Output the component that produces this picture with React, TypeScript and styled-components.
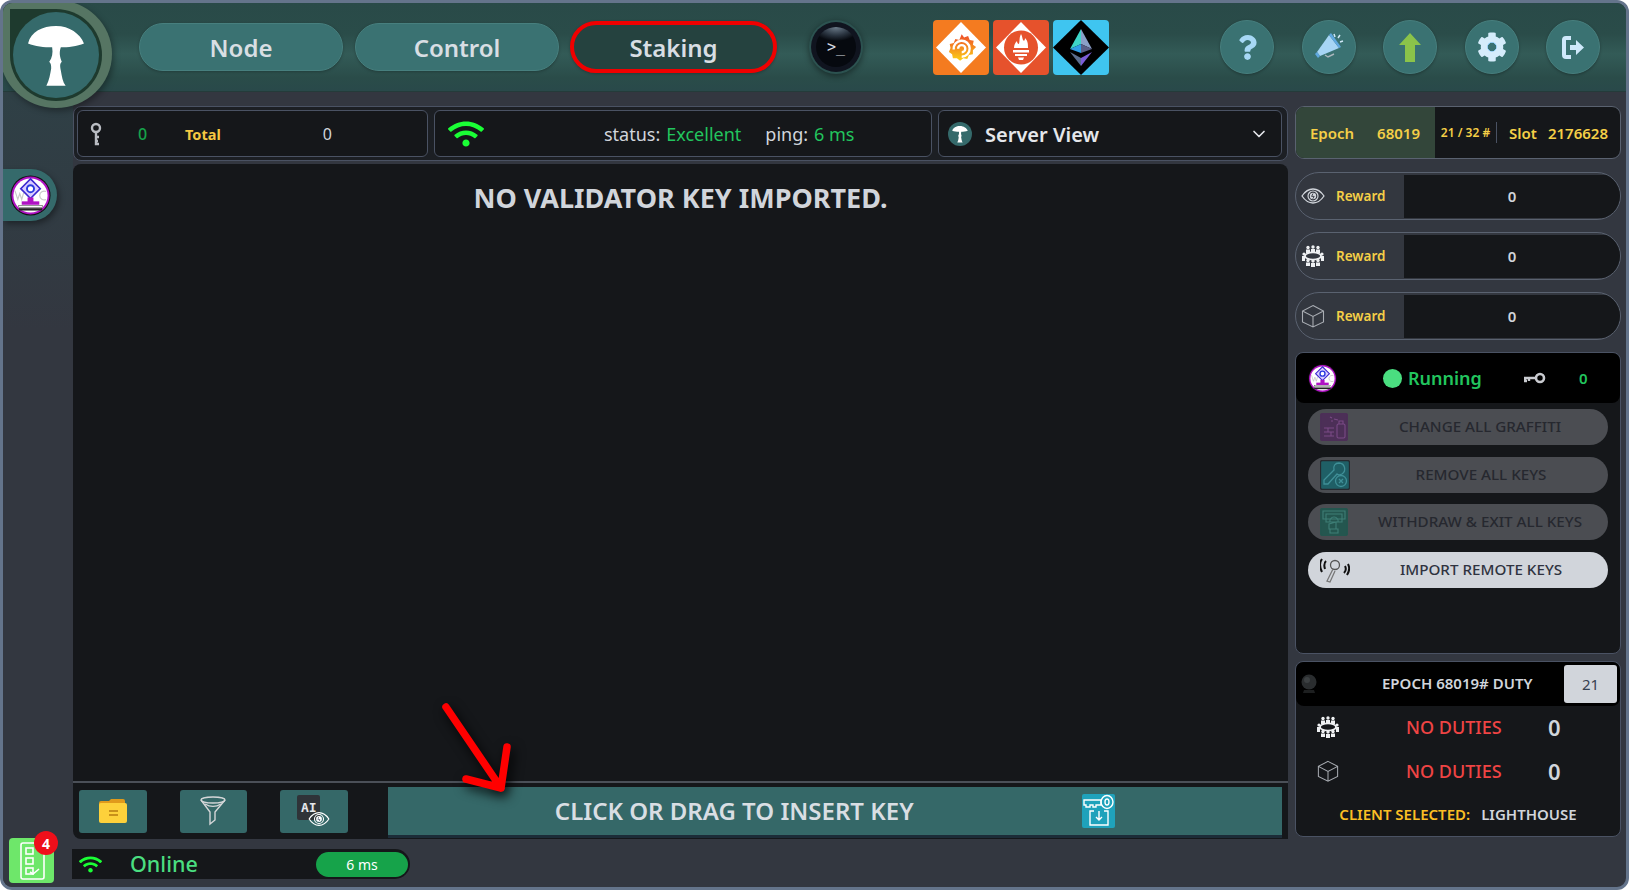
import React from 'react';
import styled, { createGlobalStyle } from 'styled-components';
import { FaWifi, FaCog, FaQuestion } from 'react-icons/fa';
import { ChevronDown } from 'lucide-react';

const Global = createGlobalStyle`
  html, body { margin: 0; padding: 0; background: #ffffff; }
  * { box-sizing: border-box; }
  svg { flex: none; }
  body { font-family: "Noto Sans", "Liberation Sans", sans-serif; }
`;

// icons
const Mushroom = (props: { size: number }) => (
  <svg width={props.size} height={props.size} viewBox="0 0 112 108">
    <path fill="#fff" d="M27 42C30 30 42 24 56 24C70 24 81 32 85 42C78 45 68 46 61 46C59 52 60 56 62 61C60 63 60 65 61 70C62 76 63 82 66 86L46 86C49 80 50 74 51 68C51 65 51 63 49 61C52 57 53 52 52 46C44 46 34 45 27 42Z" />
  </svg>
);

const VcLogo = (props: { size: number }) => (
  <svg width={props.size} height={props.size} viewBox="0 0 42 42">
    <circle cx="21" cy="21" r="20.500" fill="#111" />
    <circle cx="21" cy="21" r="19.500" fill="#b012c4" />
    <circle cx="21" cy="21" r="17.500" fill="#fff" />
    <path d="M5 16l3 9 2-6 2 6 2-7M37 17a4.500 4.500 0 1 0 0 8" fill="none" stroke="#c9c9c9" strokeWidth="1.200" />
    <path d="M21 4L31 14 21 24 11 14Z" fill="#d9ccff" stroke="#3b28d0" strokeWidth="1.600" />
    <circle cx="21" cy="14" r="3.600" fill="#fff" stroke="#2a3ae0" strokeWidth="2" />
    <rect x="18" y="23" width="6" height="5" fill="#b012c4" />
    <rect x="12" y="27" width="18" height="3.500" fill="#b012c4" />
    <rect x="9" y="31" width="24" height="2" fill="#fff" stroke="#222" strokeWidth=".5" />
    <rect x="9" y="34" width="24" height="2.400" fill="#222" />
  </svg>
);

const KeyUp = () => (
  <svg width="14" height="24" viewBox="0 0 14 24" fill="none">
    <circle cx="7" cy="6" r="4" stroke="#b9bcc2" strokeWidth="2.400" />
    <path d="M7 10V22H10M7 15H10M7 19H9" stroke="#b9bcc2" strokeWidth="2.400" />
  </svg>
);

const KeySide = () => (
  <svg width="22" height="12" viewBox="0 0 22 12" fill="none">
    <circle cx="16" cy="6" r="4" stroke="#c9cbd0" strokeWidth="2.600" />
    <path d="M12 6H1V9H3M5 6V9" stroke="#c9cbd0" strokeWidth="2.400" />
  </svg>
);

const Eye = () => (
  <svg width="24" height="16" viewBox="0 0 24 16" fill="none">
    <path d="M1 8C5 2 9 1 12 1s7 1 11 7c-4 6-8 7-11 7S5 14 1 8Z" stroke="#d1d5db" strokeWidth="1.300" />
    <circle cx="12" cy="8" r="5" stroke="#d1d5db" strokeWidth="1.200" />
    <circle cx="12" cy="8" r="3.200" fill="#d1d5db" />
    <path d="M12 5.500L10.600 8.400H13.200L11.800 10.800" stroke="#33373f" strokeWidth=".9" />
  </svg>
);

const Committee = (props: { size?: number }) => (
  <svg width={props.size || 22} height={props.size || 22} viewBox="0 0 22 22" fill="#eef0f2">
    <circle cx="6" cy="2.500" r="1.700" /><circle cx="11" cy="2" r="1.700" /><circle cx="16" cy="2.500" r="1.700" />
    <path d="M4 4.500h4V8H4zM9 4h4v4H9zM14 4.500h4V8h-4z" />
    <circle cx="2" cy="9" r="1.600" /><circle cx="20" cy="9" r="1.600" />
    <path d="M0 11h3v5H0zM19 11h3v5h-3z" />
    <ellipse cx="11" cy="11" rx="8" ry="3.600" fill="none" stroke="#eef0f2" strokeWidth="1.800" />
    <circle cx="6" cy="15.500" r="1.700" /><circle cx="11" cy="16" r="1.700" /><circle cx="16" cy="15.500" r="1.700" />
    <path d="M4 17.500h4V21H4zM9 18h4v4H9zM14 17.500h4V21h-4z" />
  </svg>
);

const Cube = (props: { size?: number }) => (
  <svg width={props.size || 24} height={props.size || 24} viewBox="0 0 24 24" fill="none" stroke="#a9adb3" strokeWidth="1.100">
    <path d="M12 1.500L22.500 7V18L12 23 1.500 18V7ZM1.500 7L12 12.500 22.500 7M12 12.500V23" />
  </svg>
);

const Funnel = () => (
  <svg width="26" height="30" viewBox="0 0 26 30" fill="none" stroke="#d4d6d8" strokeWidth="1.400">
    <ellipse cx="13" cy="4" rx="12" ry="3" />
    <path d="M1 4L10 16V28L15 24V16L25 4" />
    <path d="M5 8C10 11 16 11 21 8" />
  </svg>
);

const Folder = () => (
  <svg width="28" height="24" viewBox="0 0 28 24">
    <path fill="#e09a1c" d="M0 4a2 2 0 0 1 2-2h8l2 -2h12a2 2 0 0 1 2 2v4H0Z" />
    <rect y="4" width="28" height="20" rx="2" fill="#fdd13b" />
    <rect x="10" y="11" width="9" height="2" fill="#c8901a" />
    <rect x="10" y="15" width="9" height="2" fill="#c8901a" />
  </svg>
);

const Megaphone = () => (
  <svg width="30" height="28" viewBox="0 0 30 28">
    <path fill="#a7d5f5" d="M15 2L25 15 6 23 3 19Z" />
    <path fill="#5fa8e0" d="M15 2l2-2 10 14-2 1ZM3 19l3 4-2 2-3-4Z" />
    <path fill="none" stroke="#a9b5bc" strokeWidth="1.500" d="M11 22l3 2 6-3" />
    <path stroke="#cfe8f7" strokeWidth="1.500" d="M20 1l1 3M26 2l-2 3M29 8l-3 1" />
  </svg>
);

const ArrowUp = () => (
  <svg width="22" height="29" viewBox="0 0 22 29">
    <path fill="#8bc34a" d="M11 0L22 12H16V29H6V12H0Z" />
  </svg>
);

const ExitIcon = () => (
  <svg width="24" height="23" viewBox="0 0 24 23" fill="none">
    <path d="M10 2H5a2 2 0 0 0-2 2V19a2 2 0 0 0 2 2H10" stroke="#cfe9fb" strokeWidth="4" />
    <path fill="#cfe9fb" d="M9 9h6V4l8 7.500L15 19v-5H9Z" />
  </svg>
);

const GrafanaMark = () => (
  <svg width="56" height="55" viewBox="0 0 56 55">
    <defs>
      <linearGradient id="gf" x1="0" y1="1" x2="0" y2="0">
        <stop offset="0" stopColor="#fcd116" />
        <stop offset="1" stopColor="#ee4a2a" />
      </linearGradient>
    </defs>
    <path fill="#fff" d="M28 2L53 27.500 28 53 3 27.500Z" />
    <g transform="translate(5.500 5.500) scale(0.8)">
      <path fill="url(#gf)" d="M29 11l3 4 5-2 2 5 5 1-1 5 4 3-4 4 0 5-5 1-2 5-5-1-4 3-4-3-5 0-1-5-4-3 2-5-1-5 5-1 2-5 5 1Z" />
      <path d="M19 30a10 10 0 1 1 10 9M24.500 29a4.500 4.500 0 1 1 4.500 4.500" fill="none" stroke="#fff" strokeWidth="3" />
    </g>
  </svg>
);

const PrometheusMark = () => (
  <svg width="56" height="55" viewBox="0 0 56 55">
    <path fill="#fff" d="M28 2L53 27.500 28 53 3 27.500Z" />
    <circle cx="28" cy="27.500" r="17" fill="#e6522c" />
    <path fill="#fff" d="M28 14c2 4 1 5 3 7 1-1 1-3 1-3 3 3 3 6 3 10H21c0-3 1-5 3-7 0 2 1 3 2 3 1-4 0-6 2-10ZM20 30h16v2.500H20ZM22 34h12v2H22ZM25 37.500h6l-1 2.500h-4Z" />
  </svg>
);

const EthereumMark = () => (
  <svg width="56" height="55" viewBox="0 0 56 55">
    <path fill="#000" d="M28 0L56 27.500 28 55 0 27.500Z" />
    <path fill="#3dd6c8" d="M28 9L17 29l11-5Z" />
    <path fill="#8aa0c8" d="M28 9L39 29l-11-5Z" />
    <path fill="#2f9fe6" d="M17 29l11-5v9Z" />
    <path fill="#5a5f88" d="M39 29l-11-5v9Z" />
    <path fill="#5c6e8e" d="M17 32l11 6v8Z" />
    <path fill="#7b5cd6" d="M39 32l-11 6v8Z" />
  </svg>
);

const GraffitiIcon = () => (
  <svg width="28" height="28" viewBox="0 0 28 28" fill="none" stroke="#7a4a86" strokeWidth="1.100">
    <rect x="0.500" y="0.500" width="27" height="27" rx="2" fill="#4c2f57" stroke="#4c2f57" />
    <rect x="17" y="11" width="8" height="14" rx="1.500" />
    <path d="M19 11V8h4v3M4 15h10M4 19h10M4 23h10M8 15v4M11 19v4M14 6l4 1M10 4l2 1M11 8l2 0" />
  </svg>
);

const RemoveKeyIcon = () => (
  <svg width="30" height="30" viewBox="0 0 30 30" fill="none" stroke="#3f8f97" strokeWidth="1.300">
    <rect x="0.500" y="0.500" width="29" height="29" rx="2" fill="#1f5f66" stroke="#262a30" />
    <path d="M19 3a6 6 0 0 1 3 11c-2 1-4 1-5 0L8 24H4v-4L14 10c-1-4 1-7 5-7Z" />
    <circle cx="21" cy="21" r="5.500" />
    <path d="M19 19l4 4M23 19l-4 4" />
  </svg>
);

const WithdrawIcon = () => (
  <svg width="28" height="28" viewBox="0 0 28 28" fill="none" stroke="#3e7f77" strokeWidth="1.100">
    <rect x="0.500" y="0.500" width="27" height="27" rx="2" fill="#24564f" stroke="#24564f" />
    <path d="M3 3h22v8H3ZM6 6h16v8H6ZM10 14a4 4 0 0 1 4-5 4 4 0 0 1 4 5M9 16l7-2v7H9ZM10 21h8v4h-8Z" />
  </svg>
);

const RemoteKeyIcon = () => (
  <svg width="30" height="28" viewBox="0 0 30 28" fill="none">
    <path d="M6 5C4 7 4 10 5 13M2 3C-1 7 0 12 2 16M25 10c1 2 1 5-1 7M28 8c2 4 1 8-1 11" stroke="#111" strokeWidth="2" />
    <circle cx="15" cy="9" r="4.500" stroke="#555" strokeWidth="1.300" />
    <path d="M13 13L7 25l3 1 5-11" stroke="#777" strokeWidth="1.300" />
  </svg>
);

const Sphere = () => (
  <svg width="16" height="20" viewBox="0 0 16 20">
    <circle cx="8" cy="8" r="7.500" fill="#2a2d2f" />
    <circle cx="6" cy="6" r="3" fill="#3c4042" />
    <path d="M3 16h10l1 3H2Z" fill="#1d1f20" />
  </svg>
);

const ChecklistIcon = () => (
  <svg width="30" height="38" viewBox="0 0 30 38" fill="none" stroke="#fff" strokeWidth="1.600">
    <rect x="4" y="1" width="23" height="36" rx="2" />
    <rect x="9" y="6" width="7" height="6" />
    <rect x="9" y="16" width="7" height="6" />
    <rect x="9" y="26" width="7" height="6" />
    <path d="M13 30l3 2 6-5" />
  </svg>
);

const KeyImportIcon = () => (
  <svg width="33" height="34" viewBox="0 0 33 34" fill="none" stroke="#fff" strokeWidth="1.400">
    <rect width="33" height="34" rx="2" fill="#1fa2bb" stroke="none" />
    <path d="M2 6H19v5h-5v2h-3v-2H8v2H4v-2H2Z" />
    <ellipse cx="25" cy="8" rx="6" ry="6.500" />
    <ellipse cx="25" cy="8" rx="2" ry="3" />
    <path d="M12 17H8v14h18V17h-4M17 17v9M14 23l3 3 3-3" />
  </svg>
);

const RedArrow = () => (
  <svg width="80" height="100" viewBox="0 0 80 100" fill="none">
    <path d="M7 7L62 88M68 47L62 88 27 79" stroke="#ff0000" strokeWidth="7.500" strokeLinecap="round" strokeLinejoin="round" />
  </svg>
);

const App = () => {
  return (
    <>
      <Global />
      <Frame>
        <LogoBadge>
          <LogoRing>
            <LogoCore><Mushroom size={108} /></LogoCore>
          </LogoRing>
        </LogoBadge>

        <Header>
          <NavPill>Node</NavPill>
          <NavPill $tight>Control</NavPill>
          <NavPill $active>Staking</NavPill>
          <TerminalBtn><TerminalFace>&gt;_</TerminalFace></TerminalBtn>
          <ServiceTiles>
            <ServiceTile $bg="#f47b20"><GrafanaMark /></ServiceTile>
            <ServiceTile $bg="#e6522c"><PrometheusMark /></ServiceTile>
            <ServiceTile $bg="#3fc5f0"><EthereumMark /></ServiceTile>
          </ServiceTiles>
          <RoundButtons>
            <RoundBtn><FaQuestion size={25} color="#a7d8f5" /></RoundBtn>
            <RoundBtn><Megaphone /></RoundBtn>
            <RoundBtn><ArrowUp /></RoundBtn>
            <RoundBtn><GearWrap><FaCog size={30} color="#d5ecfb" /></GearWrap></RoundBtn>
            <RoundBtn><ExitIcon /></RoundBtn>
          </RoundButtons>
        </Header>

        <Body>
          <Sidebar>
            <SideTab><VcLogo size={41} /></SideTab>
            <TaskButton>
              <ChecklistIcon />
              <TaskBadge>4</TaskBadge>
            </TaskButton>
          </Sidebar>

          <MainColumn>
            <TopRow>
              <KeyBox>
                <KeyUp />
                <GreenCount>0</GreenCount>
                <TotalLabel>Total</TotalLabel>
                <TotalValue>0</TotalValue>
              </KeyBox>
              <NetBox>
                <FaWifi size={36} color="#1aff35" />
                <NetLabel $offset={120}>status:</NetLabel>
                <NetValue>Excellent</NetValue>
                <NetLabel $offset={24}>ping:</NetLabel>
                <NetValue>6 ms</NetValue>
              </NetBox>
              <ViewBox>
                <ViewLogo><Mushroom size={30} /></ViewLogo>
                <ViewTitle>Server View</ViewTitle>
                <ChevronDown size={20} color="#e5e7eb" />
              </ViewBox>
            </TopRow>

            <KeyPanel>
              <EmptyTitle>NO VALIDATOR KEY IMPORTED.</EmptyTitle>
            </KeyPanel>

            <Toolbar>
              <ToolTile><Folder /></ToolTile>
              <ToolTile><Funnel /></ToolTile>
              <ToolTile>
                <AiChip>AI</AiChip>
                <AiEye><Eye /></AiEye>
              </ToolTile>
              <InsertButton>
                <span>CLICK OR DRAG TO INSERT KEY</span>
                <KeyImportIcon />
              </InsertButton>
            </Toolbar>

            <StatusBar>
              <FaWifi size={23} color="#1aff35" />
              <OnlineText>Online</OnlineText>
              <PingPill>6 ms</PingPill>
            </StatusBar>
          </MainColumn>

          <RightColumn>
            <EpochBar>
              <EpochPart>
                <span>Epoch</span>
                <span>68019</span>
              </EpochPart>
              <SlotCount>21 / 32 #</SlotCount>
              <SlotPart>
                <span>Slot</span>
                <span>2176628</span>
              </SlotPart>
            </EpochBar>

            <RewardList>
              <RewardRow>
                <RewardIcon><Eye /></RewardIcon>
                <RewardLabel>Reward</RewardLabel>
                <RewardValue>0</RewardValue>
              </RewardRow>
              <RewardRow>
                <RewardIcon><Committee /></RewardIcon>
                <RewardLabel>Reward</RewardLabel>
                <RewardValue>0</RewardValue>
              </RewardRow>
              <RewardRow>
                <RewardIcon><Cube /></RewardIcon>
                <RewardLabel>Reward</RewardLabel>
                <RewardValue>0</RewardValue>
              </RewardRow>
            </RewardList>

            <ClientPanel>
              <ClientHead>
                <VcLogo size={29} />
                <RunningDot />
                <RunningText>Running</RunningText>
                <KeySide />
                <RunningCount>0</RunningCount>
              </ClientHead>
              <ActionList>
                <ActionBtn><GraffitiIcon /><span>CHANGE ALL GRAFFITI</span></ActionBtn>
                <ActionBtn><RemoveKeyIcon /><span>REMOVE ALL KEYS</span></ActionBtn>
                <ActionBtn><WithdrawIcon /><span>WITHDRAW &amp; EXIT ALL KEYS</span></ActionBtn>
                <ActionBtn $enabled><RemoteKeyIcon /><span>IMPORT REMOTE KEYS</span></ActionBtn>
              </ActionList>
            </ClientPanel>

            <DutyPanel>
              <DutyHead>
                <Sphere />
                <DutyTitle>EPOCH 68019# DUTY</DutyTitle>
                <SlotBox>21</SlotBox>
              </DutyHead>
              <DutyRow>
                <Committee size={22} />
                <NoDuties>NO DUTIES</NoDuties>
                <DutyCount>0</DutyCount>
              </DutyRow>
              <DutyRow>
                <Cube size={22} />
                <NoDuties>NO DUTIES</NoDuties>
                <DutyCount>0</DutyCount>
              </DutyRow>
              <ClientLine>
                <b>CLIENT SELECTED:</b>
                <span>LIGHTHOUSE</span>
              </ClientLine>
            </DutyPanel>
          </RightColumn>
        </Body>

        <ArrowMark><RedArrow /></ArrowMark>
      </Frame>
    </>
  );
};

export default App;

// frame
const Frame = styled.div`
  position: relative;
  width: 1629px;
  height: 890px;
  display: flex;
  flex-direction: column;
  overflow: hidden;
  background: #333740;
  border: 3px solid #64748b;
  border-radius: 12px;
`;

// logo
const LogoBadge = styled.div`
  position: absolute;
  left: -3px;
  top: -3px;
  z-index: 3;
  width: 112px;
  height: 108px;
  padding: 9px 10px 7px 10px;
  background: #567563;
  border-radius: 12px 50% 50% 50%;
  box-shadow: 2px 3px 6px rgba(0, 0, 0, 0.35);
`;

const LogoRing = styled.div`
  width: 92px;
  height: 92px;
  padding: 3px;
  background: #1e3a2e;
  border-radius: 0 50% 50% 50%;
`;

const LogoCore = styled.div`
  width: 86px;
  height: 86px;
  display: flex;
  align-items: center;
  justify-content: center;
  overflow: hidden;
  background: #356a6b;
  border-radius: 50%;
`;

// header
const Header = styled.header`
  flex: none;
  height: 89px;
  display: flex;
  align-items: center;
  padding: 0 0 0 136px;
  background: linear-gradient(180deg, #294a48 0%, #2a4c49 35%, #335b57 58%, #2a4c49 85%, #29494a 100%);
  border-bottom: 1px solid #243b3a;
`;

const NavPill = styled.div<{ $active?: boolean; $tight?: boolean }>`
  width: ${props => props.$active ? '207px' : '204px'};
  height: ${props => props.$active ? '52px' : '48px'};
  margin-right: ${props => props.$active ? '33px' : props.$tight ? '11px' : '12px'};
  display: flex;
  align-items: center;
  justify-content: center;
  font-size: 24px;
  font-weight: 600;
  color: #d8dee3;
  background: ${props => props.$active ? '#25423f' : '#3a7272'};
  border: ${props => props.$active ? '4px solid #f00000' : '1px solid #477f7e'};
  border-radius: 26px;
  box-shadow: 0 1px 3px rgba(0, 0, 0, 0.25);
`;

const TerminalBtn = styled.div`
  width: 50px;
  height: 50px;
  margin: 0 1px;
  display: flex;
  align-items: center;
  justify-content: center;
  background: #10141f;
  border-radius: 50%;
  box-shadow: 0 0 0 2px #2c5250, 0 2px 6px 2px rgba(0, 0, 0, 0.45);
`;

const TerminalFace = styled.div`
  width: 40px;
  height: 40px;
  display: flex;
  align-items: center;
  justify-content: center;
  font-family: "DejaVu Sans Mono", monospace;
  font-size: 15px;
  color: #d5dbe0;
  background: radial-gradient(ellipse 24px 14px at 50% 0%, #6d7d8c 0%, #2a3440 60%, transparent 100%), #06090f;
  border-radius: 50%;
`;

const ServiceTiles = styled.div`
  margin-left: 71px;
  display: flex;
  gap: 4px;
`;

const ServiceTile = styled.div<{ $bg: string }>`
  width: 56px;
  height: 55px;
  background: ${props => props.$bg};
  border-radius: 4px;
`;

const RoundButtons = styled.div`
  margin-left: 111px;
  display: flex;
  gap: 27.500px;
`;

const RoundBtn = styled.div`
  width: 54px;
  height: 54px;
  display: flex;
  align-items: center;
  justify-content: center;
  background: #3a7272;
  border: 1px solid #477f7e;
  border-radius: 50%;
  box-shadow: 0 1px 3px rgba(0, 0, 0, 0.3);
`;

const GearWrap = styled.div`
  display: flex;
  border-radius: 50%;
  background: radial-gradient(circle, #3a7272 0 4px, #7cc0ee 4px 8px, transparent 8px);
`;

// body
const Body = styled.div`
  flex: 1;
  min-height: 0;
  display: flex;
`;

const Sidebar = styled.aside`
  flex: none;
  width: 70px;
  display: flex;
  flex-direction: column;
  padding: 77px 0 4px 0;
  background: linear-gradient(180deg, #2f4046 0%, #333740 30%);
`;

const SideTab = styled.div`
  width: 54px;
  height: 52px;
  display: flex;
  align-items: center;
  padding-left: 7px;
  background: #356a6b;
  border-radius: 0 26px 26px 0;
  box-shadow: 2px 3px 6px rgba(0, 0, 0, 0.4);
`;

const TaskButton = styled.div`
  position: relative;
  margin: auto 0 0 6px;
  width: 45px;
  height: 45px;
  display: flex;
  align-items: center;
  justify-content: center;
  background: #6ee76a;
  border-radius: 4px;
`;

const TaskBadge = styled.div`
  position: absolute;
  right: -4px;
  top: -7px;
  width: 24px;
  height: 24px;
  display: flex;
  align-items: center;
  justify-content: center;
  font-size: 14px;
  font-weight: 700;
  color: #fff;
  background: #ef0f1a;
  border-radius: 50%;
`;

// main column
const MainColumn = styled.main`
  flex: none;
  width: 1215px;
  display: flex;
  flex-direction: column;
  padding: 14px 0 8px 0;
`;

const TopRow = styled.div`
  flex: none;
  height: 55px;
  display: flex;
  gap: 6px;
  padding: 3px 5px 3px 3px;
  background: #1c1f24;
  border: 1px solid #4a5263;
  border-radius: 8px;
`;

const RowBox = styled.div`
  height: 100%;
  display: flex;
  align-items: center;
  background: #15171a;
  border: 1px solid #4a5263;
  border-radius: 6px;
`;

const KeyBox = styled(RowBox)`
  flex: none;
  width: 351px;
  padding-left: 11px;
`;

const GreenCount = styled.span`
  margin-left: 35px;
  width: 10px;
  font-size: 16px;
  font-weight: 500;
  color: #16a34a;
`;

const TotalLabel = styled.span`
  margin-left: 37px;
  font-size: 14.500px;
  font-weight: 700;
  color: #f5c842;
`;

const TotalValue = styled.span`
  margin-left: 102px;
  font-size: 16px;
  color: #d1d5db;
`;

const NetBox = styled(RowBox)`
  flex: none;
  width: 498px;
  padding-left: 13px;
`;

const NetLabel = styled.span<{ $offset: number }>`
  margin-left: ${props => props.$offset}px;
  font-size: 18px;
  color: #d1d5db;
`;

const NetValue = styled.span`
  margin-left: 6px;
  font-size: 18px;
  color: #22c55e;
`;

const ViewBox = styled(RowBox)`
  flex: 1;
  padding: 0 12px 0 9px;
`;

const ViewLogo = styled.div`
  width: 24px;
  height: 24px;
  display: flex;
  align-items: center;
  justify-content: center;
  overflow: hidden;
  background: #356a6b;
  border-radius: 50%;
`;

const ViewTitle = styled.span`
  flex: 1;
  margin-left: 13px;
  padding-top: 2px;
  font-size: 20px;
  font-weight: 600;
  color: #e5e7eb;
`;

const KeyPanel = styled.section`
  flex: 1;
  min-height: 0;
  margin-top: 3px;
  padding-top: 16px;
  background: #15171a;
  border-radius: 8px 8px 0 0;
`;

const EmptyTitle = styled.h2`
  margin: 0;
  text-align: center;
  font-size: 27px;
  font-weight: 700;
  line-height: 36px;
  color: #d1d5db;
`;

const Toolbar = styled.div`
  flex: none;
  height: 58px;
  display: flex;
  align-items: center;
  padding: 0 6px 0 6px;
  background: #15171a;
  border-top: 2px solid #4b5058;
  border-radius: 0 0 0 8px;
`;

const ToolTile = styled.div`
  position: relative;
  width: 67.500px;
  height: 43px;
  margin-right: 33px;
  display: flex;
  align-items: center;
  justify-content: center;
  background: #356868;
  border-radius: 3px;
`;

const AiChip = styled.div`
  width: 23px;
  height: 25px;
  margin: -8px 10px 0 0;
  display: flex;
  align-items: center;
  justify-content: center;
  font-family: "DejaVu Sans Mono", monospace;
  font-size: 13px;
  font-weight: 700;
  color: #e5e7eb;
  background: #2f3338;
  border-radius: 2px;
`;

const AiEye = styled.div`
  position: absolute;
  right: 17px;
  bottom: 6px;
  display: flex;
  transform: scale(0.9);
  filter: brightness(1.4);
`;

const InsertButton = styled.div`
  flex: 1;
  height: 48px;
  margin-left: 7px;
  display: flex;
  align-items: center;
  justify-content: center;
  gap: 168px;
  padding-bottom: 1px;
  font-size: 24px;
  font-weight: 600;
  color: #d9dee3;
  background: #356868;
  box-shadow: 0 3px 0 #1c2c38;
`;

const StatusBar = styled.div`
  flex: none;
  width: 338px;
  height: 30px;
  margin: 10px 0 0 -1px;
  display: flex;
  align-items: center;
  padding: 0 2px 0 7px;
  background: #15171a;
  border-radius: 0 15px 15px 0;
`;

const OnlineText = styled.span`
  flex: 1;
  margin-left: 28px;
  font-size: 21.500px;
  font-weight: 500;
  line-height: 28px;
  color: #4ade80;
`;

const PingPill = styled.div`
  width: 92px;
  height: 25px;
  display: flex;
  align-items: center;
  justify-content: center;
  font-size: 14px;
  color: #fff;
  background: #16a34a;
  border-radius: 13px;
`;

// right column
const RightColumn = styled.aside`
  flex: 1;
  display: flex;
  flex-direction: column;
  padding: 14px 5px 0 7px;
`;

const EpochBar = styled.div`
  flex: none;
  height: 53px;
  display: flex;
  align-items: stretch;
  overflow: hidden;
  font-weight: 600;
  color: #f5cf47;
  background: #15171a;
  border: 1px solid #5a6270;
  border-radius: 9px;
`;

const EpochPart = styled.div`
  width: 139px;
  display: flex;
  align-items: center;
  justify-content: space-between;
  padding: 0 15px 0 14px;
  font-size: 15px;
  background: #33463a;
`;

const SlotCount = styled.div`
  width: 62px;
  display: flex;
  align-items: center;
  justify-content: center;
  margin: 15px 0;
  font-size: 12px;
  white-space: nowrap;
  border-right: 1px solid #4a5263;
`;

const SlotPart = styled.div`
  flex: 1;
  display: flex;
  align-items: center;
  justify-content: space-between;
  padding: 0 12px 0 12px;
  font-size: 15px;
`;

const RewardList = styled.div`
  flex: none;
  margin-top: 13px;
  display: flex;
  flex-direction: column;
  gap: 12px;
`;

const RewardRow = styled.div`
  height: 48px;
  display: flex;
  align-items: center;
  padding: 2px 0 2px 5px;
  overflow: hidden;
  background: #33373f;
  border: 1px solid #5a6270;
  border-radius: 24px;
`;

const RewardIcon = styled.div`
  width: 24px;
  display: flex;
  justify-content: center;
`;

const RewardLabel = styled.span`
  width: 68px;
  margin-left: 11px;
  font-size: 13.500px;
  font-weight: 600;
  color: #f5cf47;
`;

const RewardValue = styled.div`
  flex: 1;
  height: 43px;
  display: flex;
  align-items: center;
  justify-content: center;
  font-size: 15px;
  font-weight: 600;
  color: #d1d5db;
  background: #15171a;
`;

const PanelBase = styled.section`
  background: #15171a;
  border: 1px solid #4a5263;
  border-radius: 8px;
  overflow: hidden;
`;

const ClientPanel = styled(PanelBase)`
  flex: none;
  height: 302px;
  margin-top: 12px;
`;

const ClientHead = styled.div`
  height: 50px;
  display: flex;
  align-items: center;
  padding-left: 12px;
  background: #000;
  border-radius: 8px;
`;

const RunningDot = styled.span`
  width: 19px;
  height: 19px;
  margin-left: 46px;
  background: #4ade80;
  border-radius: 50%;
`;

const RunningText = styled.span`
  width: 116px;
  margin-left: 6px;
  font-size: 18px;
  font-weight: 600;
  color: #22c55e;
`;

const RunningCount = styled.span`
  margin-left: 33px;
  font-size: 15px;
  font-weight: 600;
  color: #22c55e;
`;

const ActionList = styled.div`
  display: flex;
  flex-direction: column;
  gap: 11.500px;
  padding: 6px 12px 0 12px;
`;

const ActionBtn = styled.div<{ $enabled?: boolean }>`
  height: 36px;
  display: flex;
  align-items: center;
  padding-left: 12px;
  font-size: 15.200px;
  font-weight: 500;
  color: ${props => props.$enabled ? '#2f3340' : '#26282f'};
  background: ${props => props.$enabled ? '#d1d5db' : '#4b4d52'};
  border-radius: 18px;
  & span {
    flex: 1;
    padding: 0 0 2px 4px;
    text-align: center;
  }
`;

const DutyPanel = styled(PanelBase)`
  flex: none;
  height: 176px;
  margin-top: 7px;
`;

const DutyHead = styled.div`
  height: 44px;
  display: flex;
  align-items: center;
  padding: 0 3px 0 5px;
  background: #000;
  border-radius: 8px;
`;

const DutyTitle = styled.span`
  flex: 1;
  margin-left: 65px;
  padding-bottom: 3px;
  font-size: 15px;
  font-weight: 600;
  color: #d1d5db;
`;

const SlotBox = styled.div`
  width: 53px;
  height: 38px;
  display: flex;
  align-items: center;
  justify-content: center;
  font-size: 15px;
  color: #374151;
  background: #d1d5db;
  border-radius: 3px;
`;

const DutyRow = styled.div`
  height: 44px;
  margin-top: -1px;
  margin-bottom: 1px;
  display: flex;
  align-items: center;
  padding-left: 21px;
`;

const NoDuties = styled.span`
  width: 142px;
  margin-left: 67px;
  font-size: 18px;
  font-weight: 500;
  color: #ef4444;
`;

const DutyCount = styled.span`
  font-size: 22px;
  font-weight: 600;
  color: #d1d5db;
`;

const ClientLine = styled.div`
  display: flex;
  justify-content: center;
  gap: 11px;
  padding-top: 10px;
  font-size: 15px;
  font-weight: 600;
  color: #d1d5db;
  & b {
    font-weight: 600;
    color: #fbbf24;
  }
`;

// arrow over the insert button
const ArrowMark = styled.div`
  position: absolute;
  left: 436px;
  top: 697px;
  z-index: 2;
  display: flex;
  filter: drop-shadow(3px 5px 6px rgba(0, 0, 0, 0.9));
`;
